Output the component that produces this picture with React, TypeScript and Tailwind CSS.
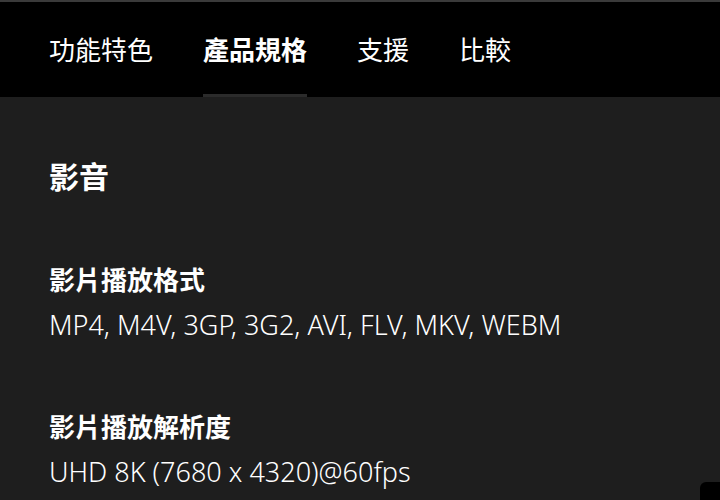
const tabs = [
  { label: "功能特色", active: false },
  { label: "產品規格", active: true },
  { label: "支援", active: false },
  { label: "比較", active: false },
];

const specs = [
  { title: "影片播放格式", value: "MP4, M4V, 3GP, 3G2, AVI, FLV, MKV, WEBM" },
  { title: "影片播放解析度", value: "UHD 8K (7680 x 4320)@60fps" },
];

const App = () => {
  return (
    <div
      className="relative h-[500px] w-[720px] overflow-hidden bg-[#1e1e1e] text-white"
      style={{ fontFamily: '"Noto Sans", "Noto Sans CJK TC", sans-serif' }}
    >
      <nav className="h-[97px] border-t-2 border-[#3a3a3a] bg-black">
        <ul className="flex h-full pl-[24px]">
          {tabs.map((t) => (
            <li key={t.label} className="relative flex h-full items-center px-[25px]">
              <span className={`text-[26px] leading-none ${t.active ? "font-bold" : "font-normal"}`}>
                {t.label}
              </span>
              {t.active && (
                <span className="absolute bottom-0 left-[25px] right-[25px] h-[3px] bg-[#2b2b2b]" />
              )}
            </li>
          ))}
        </ul>
      </nav>

      <section className="px-[49px] pt-[65px]">
        <h2 className="text-[30px] font-bold leading-none">影音</h2>
        <div className="mt-[75px] flex flex-col gap-[76px]">
          {specs.map((s) => (
            <div key={s.title} className="flex flex-col gap-[18px]">
              <h3 className="text-[26px] font-bold leading-none">{s.title}</h3>
              <p className="text-[27px] font-light leading-none">{s.value}</p>
            </div>
          ))}
        </div>
      </section>

      <div className="absolute bottom-0 right-0 h-[18px] w-[20px] rounded-tl-[6px] bg-black" />
    </div>
  );
};

export default App;
